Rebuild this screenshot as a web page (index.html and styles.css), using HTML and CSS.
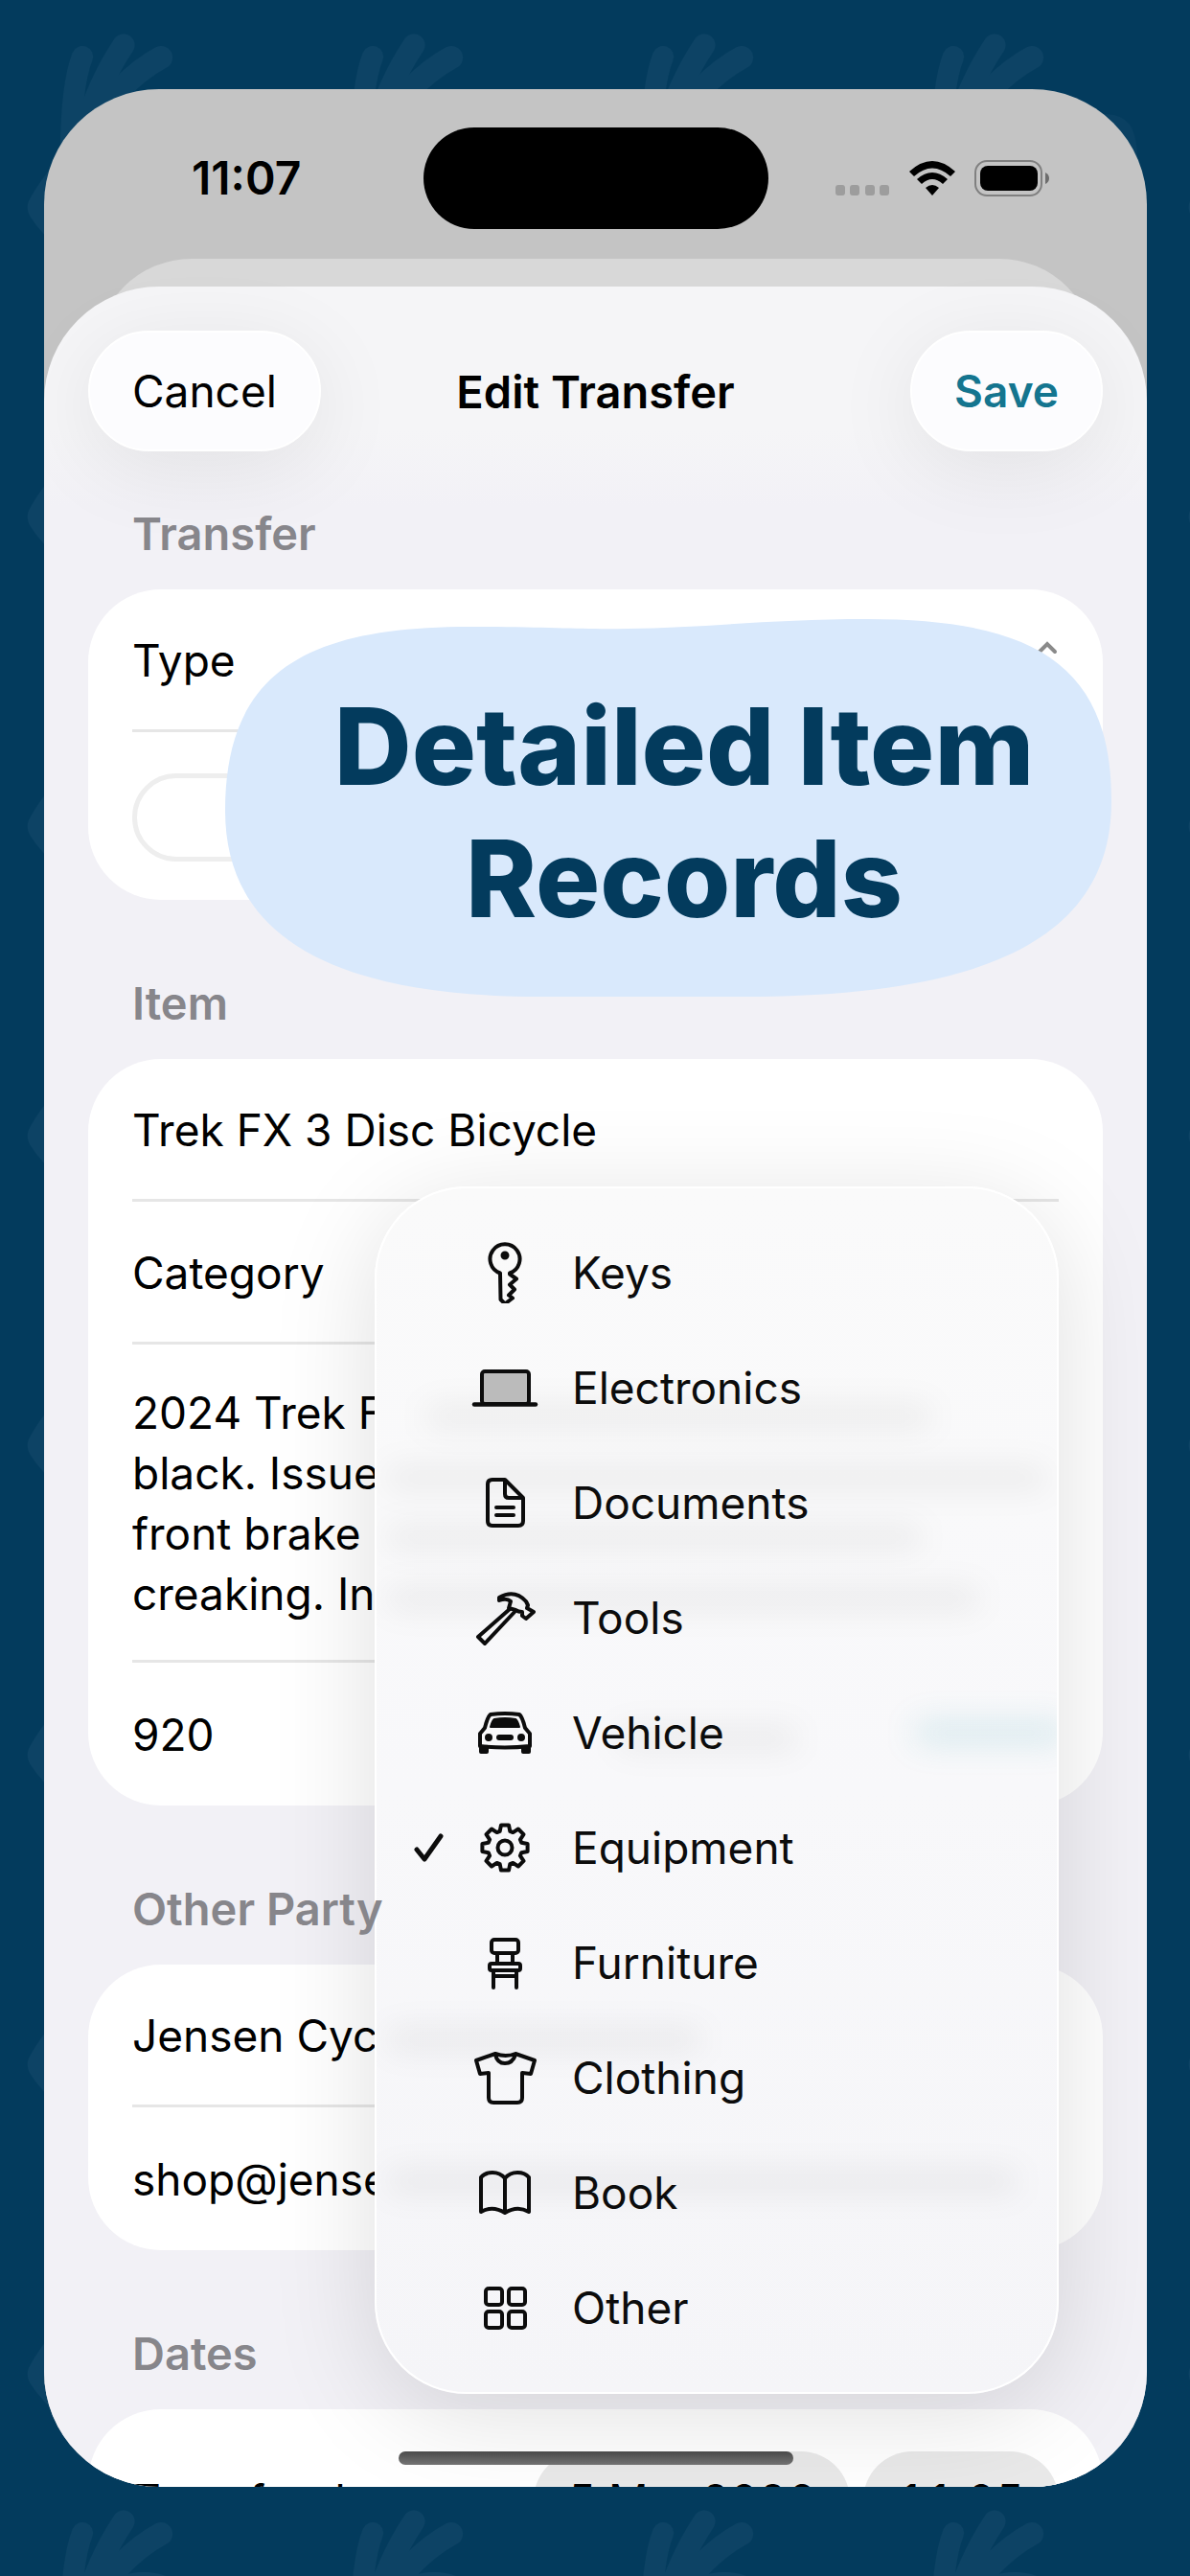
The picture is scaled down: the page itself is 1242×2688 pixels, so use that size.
FILE: index.html
```html
<!DOCTYPE html>
<html lang="en">
<head>
  <meta charset="UTF-8">
  <meta name="viewport" content="width=device-width, initial-scale=1.0">
  <title>Edit Transfer</title>
  <link rel="stylesheet" href="styles.css">
</head>
<body>
  <svg class="backdrop" aria-hidden="true">
    <defs>
      <pattern id="wings" width="303" height="323" patternUnits="userSpaceOnUse">
        <g fill="none" stroke-linecap="round" stroke="#0d4365">
          <path d="M74 160Q74 90 86 59" stroke-width="22"/>
          <path d="M84 150Q100 90 129 47" stroke-width="23"/>
          <path d="M90 140Q124 84 168 60" stroke-width="24"/>
        </g>
        <ellipse cx="150" cy="112" rx="30" ry="12" fill="#0d4365"/>
        <path d="M66 160Q40 190 30 210Q27 217 31 225Q44 246 66 262z" fill="#0d4365"/>
        <path d="M230 122Q256 114 270 130Q282 150 276 190z" fill="#0a4062"/>
      </pattern>
    </defs>
    <rect width="100%" height="100%" fill="url(#wings)"/>
  </svg>

  <main class="phone">
    <header class="status-bar">
      <span class="clock">11:07</span>
      <span class="island"></span>
      <span class="signals">
        <svg class="dots" viewBox="0 0 57 11"><g fill="#9d9d9d"><rect width="10" height="11" rx="3"/><rect x="15" width="10" height="11" rx="3"/><rect x="31" width="10" height="11" rx="3"/><rect x="46" width="10" height="11" rx="3"/></g></svg>
        <svg class="wifi" viewBox="0 0 48 36"><path d="M0 11Q24-11 48 11L43 16Q24-1 5 16z"/><path d="M8 19Q24 5 40 19L35 24Q24 14 13 24z"/><path d="M17 28Q24 22 31 28L24 36z"/></svg>
        <svg class="battery" viewBox="0 0 79 38"><rect x="1" y="1" width="69" height="36" rx="12" fill="none" stroke="#808080" stroke-width="2"/><rect x="6" y="6" width="60" height="26" rx="8"/><path d="M74 13q4 2 4 6t-4 6z" fill="#6d6d6d"/></svg>
      </span>
    </header>

    <div class="back-sheet"></div>
    <form class="sheet">
      <div class="nav">
        <button type="button" class="pill-btn">Cancel</button>
        <h2>Edit Transfer</h2>
        <button type="submit" class="pill-btn save">Save</button>
      </div>

      <h3>Transfer</h3>
      <section class="card">
        <div class="row">
          <span>Type</span>
          <svg class="chevrons" viewBox="0 0 24 40"><path d="M4 11l8-8 8 8M4 29l8 8 8-8"/></svg>
        </div>
        <div class="row segment-row"><div class="segment"></div></div>
      </section>

      <h3>Item</h3>
      <section class="card">
        <div class="row"><input type="text" aria-label="Item name" value="Trek FX 3 Disc Bicycle"></div>
        <div class="row">Category</div>
        <div class="row notes"><textarea aria-label="Description" rows="4">2024 Trek F
black. Issue
front brake
creaking. In</textarea></div>
        <div class="row"><input type="text" aria-label="Value" value="920"></div>
      </section>

      <h3>Other Party</h3>
      <section class="card">
        <div class="row"><input type="text" aria-label="Name" value="Jensen Cyc"></div>
        <div class="row"><input type="text" aria-label="Email" value="shop@jense"></div>
      </section>

      <h3>Dates</h3>
      <section class="card">
        <div class="row dates">
          <span class="date-label">Transfer date</span>
          <button type="button" class="chip">5 Mar 2026</button>
          <button type="button" class="chip">11:05</button>
        </div>
      </section>
    </form>

    <div class="home-bar"></div>

    <div class="menu">
      <div class="ghosts">
        <i class="g1"></i><i class="g2"></i><i class="g3"></i><i class="g4"></i>
        <i class="g5"></i><i class="g6"></i><i class="g7"></i><i class="g8"></i>
      </div>
      <button type="button"><span class="tick"></span>
        <svg viewBox="0 0 72 64"><path d="M31 32.500a15.500 15.500 0 1 1 10 0v1l7 5-7 6 5 5-6 6 4 3-8 6-4.500-4.500z"/><circle cx="36" cy="14" r="2.500" class="solid"/></svg>Keys</button>
      <button type="button"><span class="tick"></span>
        <svg viewBox="0 0 72 64"><rect x="12" y="15" width="49" height="34" rx="3" fill="#bbb"/><path d="M4 49.500h64" stroke-width="4.500"/></svg>Electronics</button>
      <button type="button"><span class="tick"></span>
        <svg viewBox="0 0 72 64"><path d="M36 8H23q-5 0-5 5v38q0 5 5 5h27q5 0 5-5V27zM36 8v15q0 4 4 4h15M27 37h18M27 45h18"/></svg>Documents</button>
      <button type="button"><span class="tick"></span>
        <svg viewBox="0 0 72 64"><path d="M41 23 8 52l7 7 32-34M30 11q16-9 28 4l2 4-1 3 7 4-8 7-4-3v-4q-4 0-7-2l-7-2 2-7q-4-4-12-1z"/></svg>Tools</button>
      <button type="button"><span class="tick"></span>
        <svg viewBox="0 0 72 64"><path d="M15 27q3-12 6-14 15-2 30 0 3 2 6 14l5 6v13q-26 3-52 0V33z"/><path class="solid" d="M21 26q2-7 4-8 11-2 22 0 2 1 4 8z" stroke-width="2"/><path d="M30 37h12" stroke-width="6"/><circle class="solid" cx="19" cy="37" r="2"/><circle class="solid" cx="53" cy="37" r="2"/><path class="solid" d="M11 48h6v4h-6zM55 48h6v4h-6z"/></svg>Vehicle</button>
      <button type="button"><svg class="tick" viewBox="0 0 32 32"><path d="M3 18l8 10L28 4" stroke-width="5"/></svg>
        <svg viewBox="0 0 72 64"><g transform="translate(36 32)"><path d="M-5.300-17.200-4-23.600H4L5.300-17.200 8.400-15.900 13.900-19.500 19.500-13.900 15.900-8.400 17.200-5.300 23.600-4V4L17.200 5.300 15.900 8.400 19.500 13.900 13.900 19.500 8.400 15.900 5.300 17.200 4 23.600H-4L-5.300 17.200-8.400 15.900-13.900 19.500-19.500 13.900-15.900 8.400-17.200 5.300-23.600 4V-4L-17.200-5.300-15.900-8.400-19.500-13.900-13.900-19.500-8.400-15.900z"/><circle r="7.500"/></g></svg>Equipment</button>
      <button type="button"><span class="tick"></span>
        <svg viewBox="0 0 72 64"><rect x="22" y="8" width="28" height="14" rx="3"/><path d="M28 22v10M44 22v10M24 42v16M48 42v16M24 46h24"/><rect x="20" y="33" width="32" height="7" rx="2"/></svg>Furniture</button>
      <button type="button"><span class="tick"></span>
        <svg viewBox="0 0 72 64"><path d="M26 7 6 14l4 14 9-1v26q0 5 5 5h25q5 0 5-5V27l9 1 4-14-20-7q-10 4-21 0zM26 8q2 9 10 9t11-9"/></svg>Clothing</button>
      <button type="button"><span class="tick"></span>
        <svg viewBox="0 0 72 64"><path d="M36 17q-5-6-13-6t-12 5v36q12-7 25 1 13-8 25-1V16q-4-5-12-5t-13 6zv36"/></svg>Book</button>
      <button type="button"><span class="tick"></span>
        <svg viewBox="0 0 72 64"><rect x="16" y="12" width="17" height="17" rx="3"/><rect x="40" y="12" width="17" height="17" rx="3"/><rect x="16" y="36" width="17" height="17" rx="3"/><rect x="40" y="36" width="17" height="17" rx="3"/></svg>Other</button>
    </div>

    <div class="banner">
      <svg viewBox="0 0 926 394" preserveAspectRatio="none" aria-hidden="true"><path d="M0 200C0 55 85 8 255 8C340 8 370 11 420 10C500 9 570 0 670 0C848 0 925 50 925 190C925 330 800 394 540 394H330C110 394 0 330 0 200z"/></svg>
      <h1>Detailed Item Records</h1>
    </div>
  </main>
</body>
</html>
```

FILE: styles.css
```css
:root {
  --navy: #033b5d;
  --gray-text: #87868b;
  --sheet: #f2f1f6;
  --line: #e6e6e6;
}

* {
  box-sizing: border-box;
  margin: 0;
  padding: 0;
}

body {
  height: 100vh;
  padding: 93px 45px 93px 46px;
  background: var(--navy);
  font-family: Inter, "Liberation Sans", sans-serif;
  font-size: 46px;
  line-height: 63px;
  color: #000;
  overflow: hidden;
}

button, input, textarea {
  font: inherit;
  color: inherit;
  background: none;
  border: 0;
}

.backdrop {
  position: absolute;
  inset: 0;
  width: 100%;
  height: 100%;
}

.phone {
  position: relative;
  height: 100%;
  border-radius: 120px;
  background: #c4c4c4;
  overflow: hidden;
}

/* status bar */
.status-bar {
  display: grid;
  grid-template-columns: 1fr 360px 1fr;
  align-items: center;
  height: 177px;
  padding-top: 8px;
}

.clock {
  padding-left: 154px;
  font-size: 48px;
  font-weight: 600;
}

.island {
  height: 106px;
  border-radius: 53px;
  background: #000;
}

.signals {
  display: flex;
  align-items: center;
  justify-content: flex-end;
  gap: 20px;
  padding-right: 101px;
}

.dots { width: 57px; height: 11px; margin-top: 26px; }
.wifi { width: 48px; height: 36px; }
.battery { width: 79px; height: 38px; }

.back-sheet {
  height: 200px;
  margin: 0 54px -171px;
  border-radius: 105px;
  background: #d8d8d8;
}

.sheet {
  position: relative;
  min-height: 100%;
  padding: 46px 46px 0;
  border-radius: 120px 120px 0 0;
  background: linear-gradient(#f5f5f7 150px, var(--sheet) 230px);
}

.nav {
  display: flex;
  align-items: center;
  justify-content: space-between;
  height: 126px;
  margin-bottom: 54px;
}

h2 {
  position: absolute;
  left: 0;
  right: 0;
  text-align: center;
  font-size: 47px;
  font-weight: 600;
}

.pill-btn {
  position: relative;
  z-index: 1;
  height: 126px;
  padding: 0 44px;
  border-radius: 63px;
  background: #fcfcfe;
  border: 2px solid #fff;
  box-shadow: 0 16px 90px rgba(0, 0, 0, 0.08);
}

.save {
  color: #14758f;
  font-weight: 600;
}

h3 {
  position: relative;
  z-index: 2;
  padding: 0 46px;
  margin-bottom: 27px;
  font-size: 47px;
  font-weight: 600;
  line-height: 63px;
  color: var(--gray-text);
}

.card {
  margin-bottom: 76px;
  padding: 0 46px;
  border-radius: 76px;
  background: #fff;
}

.row {
  display: flex;
  align-items: center;
  justify-content: space-between;
  height: 149px;
  padding-top: 2px;
  border-bottom: 3px solid var(--line);
}

.row:last-child {
  border-bottom: 0;
}

.row input {
  width: 100%;
}

.segment-row {
  height: 175px;
}

.segment {
  flex: 1;
  height: 92px;
  border: 5px solid #eee;
  border-radius: 46px;
}

.chevrons {
  width: 24px;
  height: 40px;
  fill: none;
  stroke: #8a8a8a;
  stroke-width: 4;
  stroke-linecap: round;
}

.notes {
  height: 332px;
}

.notes textarea {
  width: 100%;
  height: 252px;
  resize: none;
  overflow: hidden;
}

.dates {
  gap: 14px;
  height: 188px;
}

.date-label {
  flex: 1;
}

.chip {
  height: 102px;
  padding: 0 36px;
  border-radius: 51px;
  background: #e9e9e9;
  font-variant-numeric: tabular-nums;
}

.home-bar {
  position: absolute;
  bottom: 23px;
  left: 50%;
  width: 412px;
  height: 14px;
  margin-left: -206px;
  border-radius: 7px;
  background: linear-gradient(#4c4c4c, #757575);
}

/* category menu */
.menu {
  position: absolute;
  top: 1145px;
  right: 92px;
  width: 714px;
  padding: 28px 0;
  border: 2px solid #fff;
  border-radius: 96px;
  background: linear-gradient(#fafafa, #f8f8fa 50%, #f5f5f8);
  box-shadow: 0 20px 110px rgba(0, 0, 0, 0.13);
  overflow: hidden;
}

.menu button {
  position: relative;
  display: flex;
  align-items: center;
  width: 100%;
  height: 120px;
  padding-left: 39px;
  color: #0c0c0c;
  text-align: left;
}

.menu svg {
  width: 72px;
  height: 64px;
  margin-right: 34px;
  fill: none;
  stroke: #0c0c0c;
  stroke-width: 4;
  stroke-linecap: round;
  stroke-linejoin: round;
}

.menu .solid {
  fill: #0c0c0c;
}

.menu .tick {
  width: 32px;
  height: 32px;
  margin-right: 27px;
}

/* soft traces of the form seen through the menu */
.ghosts i {
  position: absolute;
  left: 10px;
  height: 24px;
  border-radius: 12px;
  background: rgba(0, 0, 0, 0.06);
  filter: blur(16px);
}

.ghosts .g1 { top: 226px; left: 50px; width: 530px; }
.ghosts .g2 { top: 290px; width: 690px; }
.ghosts .g3 { top: 352px; width: 560px; }
.ghosts .g4 { top: 416px; width: 620px; }
.ghosts .g5 { top: 562px; left: 250px; width: 190px; }
.ghosts .g6 { top: 556px; left: 560px; width: 160px; background: rgba(20, 150, 170, 0.14); }
.ghosts .g7 { top: 876px; width: 330px; }
.ghosts .g8 { top: 1024px; width: 660px; }

/* caption */
.banner {
  position: absolute;
  top: 553px;
  right: 36px;
  width: 926px;
  padding: 63px 80px 55px 112px;
}

.banner svg {
  position: absolute;
  inset: 0;
  width: 100%;
  height: 100%;
  fill: #d9e9fc;
}

h1 {
  position: relative;
  text-align: center;
  font-size: 112px;
  font-weight: 800;
  line-height: 138px;
  color: var(--navy);
}
```
